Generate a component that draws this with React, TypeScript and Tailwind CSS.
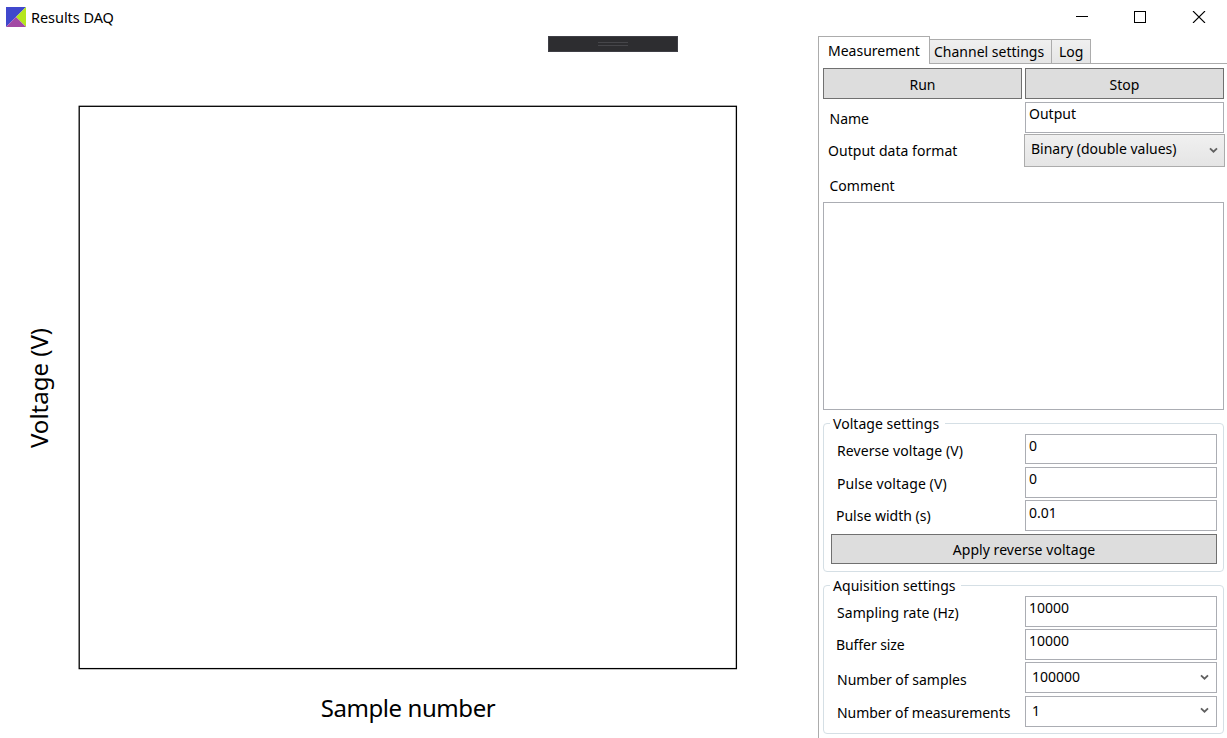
import type { ReactNode } from "react";

function Button({ children, className = "" }: { children: ReactNode; className?: string }) {
  return (
    <button className={`flex items-start justify-center border border-[#707070] bg-[#dddddd] leading-5 ${className}`}>
      {children}
    </button>
  );
}

function Chevron({ className = "" }: { className?: string }) {
  return (
    <svg className={`shrink-0 ${className}`} width="9" height="7" viewBox="0 0 9 7" fill="none">
      <path d="M1 1.3 L4.5 4.7 L8 1.3" stroke="#606060" strokeWidth="1.8" />
    </svg>
  );
}

function Row({ label, labelClass, className, children }: { label: string; labelClass: string; className: string; children: ReactNode }) {
  return (
    <div className={`flex items-start ${className}`}>
      <div className="flex min-w-0 flex-1">
        <span className={`whitespace-nowrap leading-5 ${labelClass}`}>{label}</span>
      </div>
      {children}
    </div>
  );
}

function Box({ children, className }: { children: ReactNode; className: string }) {
  return <div className={`flex shrink-0 items-start border border-[#abadb3] bg-white leading-5 ${className}`}>{children}</div>;
}

function Group({ title, titleClass, children }: { title: string; titleClass: string; children: ReactNode }) {
  return (
    <section className="mt-[13px] h-[149px] w-[401px] rounded-[4px] border border-[#d5dfe5] pr-[6px]">
      <div className="-mt-[10px] ml-[6px] flex h-5">
        <h2 className={`whitespace-nowrap bg-white pl-[3px] leading-5 tracking-[0.04px] ${titleClass}`}>{title}</h2>
      </div>
      {children}
    </section>
  );
}

function TitleBar() {
  return (
    <header className="flex h-9 items-start">
      <svg className="ml-[6px] mt-[7px]" width="20" height="20" viewBox="0 0 20 20">
        <path d="M0 0H20L0 20Z" fill="#4048cd" />
        <path d="M20 0V20L10 10Z" fill="#b5e61d" />
        <path d="M0 20L10 10L20 20Z" fill="#a349a4" />
      </svg>
      <h1 className="ml-[5px] mt-[7px] flex-1 text-[14.5px] leading-5 tracking-[-0.05px]">Results DAQ</h1>
      <svg className="mt-[11px]" width="151" height="12" viewBox="0 0 151 12" fill="none" stroke="#000" shapeRendering="crispEdges">
        <path d="M0 5.5H12" />
        <path d="M58.5 0.5H69.5V11.5H58.5Z" />
        <path d="M117 0L129 12M129 0L117 12" shapeRendering="auto" strokeWidth="1.1" />
      </svg>
    </header>
  );
}

function Plot() {
  return (
    <main className="flex w-[818px] flex-col">
      <div className="ml-[548px] flex h-4 w-[130px] flex-col items-center gap-[2px] border border-[#3f3f46] bg-[#2d2d30] pt-[5px]">
        <div className="h-px w-[30px] bg-[#46464a]" />
        <div className="h-px w-[30px] bg-[#46464a]" />
      </div>
      <div className="mt-[53px] flex h-[565px]">
        <div className="flex w-[78px] items-center justify-center pl-[1px]">
          <span className="-rotate-90 whitespace-nowrap text-[24px] leading-8">Voltage (V)</span>
        </div>
        <svg width="660" height="565" viewBox="0 0 660 565" fill="none">
          <rect x="1.2" y="1.3" width="657.2" height="562.3" stroke="#000" strokeWidth="1.3" />
        </svg>
      </div>
      <div className="mt-[22px] flex w-[816px] justify-center text-[24px] leading-8 tracking-[-0.42px]">Sample number</div>
    </main>
  );
}

function Tabs() {
  return (
    <nav className="flex h-[28px] items-end leading-5">
      <div className="h-[28px] w-[112px] shrink-0 border-x border-t border-[#acacac] bg-white pl-[9px] pt-[4px]">Measurement</div>
      <div className="h-[25px] w-[122px] shrink-0 whitespace-nowrap border-y border-r border-[#acacac] bg-linear-to-b from-[#f0f0f0] to-[#e5e5e5] pl-[4px] pt-[2px]">
        Channel settings
      </div>
      <div className="h-[25px] w-[39px] shrink-0 border-y border-r border-[#acacac] bg-linear-to-b from-[#f0f0f0] to-[#e5e5e5] pl-[7px] pt-[2px]">Log</div>
      <div className="h-px flex-1 bg-[#acacac]" />
    </nav>
  );
}

export default function App() {
  return (
    <div className="flex h-[738px] w-[1227px] flex-col overflow-hidden bg-white font-['Noto_Sans',sans-serif] text-[14px] text-black">
      <TitleBar />
      <div className="flex flex-1">
        <Plot />
        <aside className="flex w-[409px] flex-col">
          <Tabs />
          <div className="h-[674px] border-l border-[#acacac] pl-[4px] pt-[4px]">
            <div className="flex gap-[3px]">
              <Button className="h-[31px] w-[199px] pt-[6px]">Run</Button>
              <Button className="h-[31px] w-[199px] pt-[6px]">Stop</Button>
            </div>
            <Row label="Name" labelClass="pl-[6.5px] pt-[7px]" className="mt-[3px] h-[31px] w-[401px]">
              <Box className="h-[31px] w-[199px] pl-[3px] pt-[1px]">Output</Box>
            </Row>
            <Row label="Output data format" labelClass="pl-[5px] pt-[7px] tracking-[0.04px]" className="mt-[1px] h-[33px] w-[402px]">
              <div className="flex h-[33px] w-[201px] shrink-0 items-start justify-between border border-[#acacac] bg-linear-to-b from-[#f0f0f0] to-[#e5e5e5] pl-[6px] pr-[6px] pt-[4px] leading-5">
                <span>Binary (double values)</span>
                <Chevron className="mt-[8px]" />
              </div>
            </Row>
            <div className="mt-[9px] h-5 pl-[6.5px] leading-5">Comment</div>
            <div className="mt-[6px] h-[208px] w-[401px] border border-[#abadb3]" />

            <Group title="Voltage settings" titleClass="w-[115px]">
              <Row label="Reverse voltage (V)" labelClass="pl-[13px] pt-[7px] tracking-[0.08px]" className="h-[30px]">
                <Box className="h-[30px] w-[192px] pl-[3px] pt-[1px]">0</Box>
              </Row>
              <Row label="Pulse voltage (V)" labelClass="pl-[13px] pt-[7px] tracking-[0.1px]" className="mt-[3px] h-[31px]">
                <Box className="h-[31px] w-[192px] pl-[3px] pt-[1px]">0</Box>
              </Row>
              <Row label="Pulse width (s)" labelClass="pl-[12px] pt-[6px]" className="mt-[2px] h-[31px]">
                <Box className="h-[31px] w-[192px] pl-[3px] pt-[2px]">0.01</Box>
              </Row>
              <Button className="ml-[7px] mt-[3px] h-[30px] w-[386px] pt-[5px] tracking-[0.06px]">Apply reverse voltage</Button>
            </Group>

            <Group title="Aquisition settings" titleClass="w-[131px]">
              <Row label="Sampling rate (Hz)" labelClass="pl-[13px] pt-[7px] tracking-[0.06px]" className="h-[31px]">
                <Box className="h-[31px] w-[192px] pl-[3px] pt-[1px]">10000</Box>
              </Row>
              <Row label="Buffer size" labelClass="pl-[12px] pt-[6px] tracking-[-0.08px]" className="mt-[2px] h-[31px]">
                <Box className="h-[31px] w-[192px] pl-[3px] pt-[1px]">10000</Box>
              </Row>
              <Row label="Number of samples" labelClass="pl-[13px] pt-[8px]" className="mt-[2px] h-[31px]">
                <Box className="h-[31px] w-[192px] justify-between pl-[6px] pr-[7px] pt-[4px]">
                  <span>100000</span>
                  <Chevron className="mt-[7px]" />
                </Box>
              </Row>
              <Row label="Number of measurements" labelClass="pl-[13px] pt-[7px] tracking-[-0.04px]" className="mt-[3px] h-[31px]">
                <Box className="h-[31px] w-[192px] justify-between pl-[6px] pr-[7px] pt-[4px]">
                  <span>1</span>
                  <Chevron className="mt-[6px]" />
                </Box>
              </Row>
            </Group>
          </div>
        </aside>
      </div>
    </div>
  );
}
